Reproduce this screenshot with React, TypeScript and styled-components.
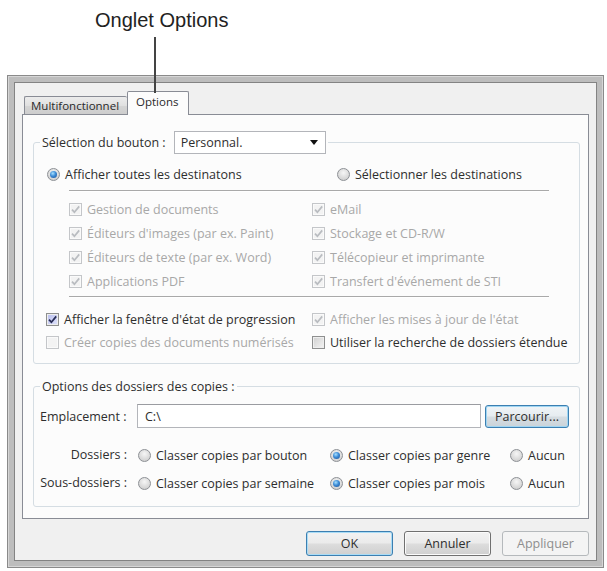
import styled, { createGlobalStyle, css } from 'styled-components';

const GlobalStyle = createGlobalStyle`
  html, body {
    margin: 0;
    padding: 0;
    background: #fff;
  }
  body {
    font-family: "Open Sans", "Noto Sans", "DejaVu Sans", sans-serif;
  }
  * {
    box-sizing: border-box;
  }
`;

const Page = styled.div`
  position: relative;
  width: 607px;
  height: 571px;
  background: #fff;
`;

const Caption = styled.div`
  height: 75px;
  padding: 8px 0 0 95px;
  font-family: "Liberation Sans", Arial, sans-serif;
  font-size: 20px;
  line-height: 24px;
  color: #222;
`;

// callout line from the caption down to the tab
const Leader = styled.div`
  position: absolute;
  left: 154px;
  top: 37px;
  width: 2px;
  height: 56px;
  background: #444;
  z-index: 2;
`;

const Dialog = styled.div`
  margin-left: 7px;
  width: 597px;
  height: 493px;
  border: 1px solid #8a8a8a;
  background: #bdbdbd;
  padding: 6px;
  box-shadow: inset 0 0 0 1px #d6d6d6;
`;

const Client = styled.div`
  height: 100%;
  display: flex;
  flex-direction: column;
  border: 1px solid #838383;
  background: #f0f0f0;
  padding: 8px 7px 4px 7px;
`;

const TabStrip = styled.div`
  display: flex;
  align-items: flex-end;
  height: 23px;
  padding-left: 2px;
`;

const Tab = styled.div<{ $active?: boolean }>`
  display: flex;
  align-items: center;
  font-size: 11.5px;
  color: #2a2a2a;
  border: 1px solid #898c95;
  border-bottom: none;
  border-radius: 2px 2px 0 0;
  ${(p) =>
    p.$active
      ? css`
          width: 62px;
          height: 24px;
          margin-bottom: -1px;
          padding: 0 0 4px 8px;
          background: #fcfcfc;
          position: relative;
          z-index: 1;
        `
      : css`
          width: 103px;
          height: 18px;
          padding-left: 6px;
          border-right: none;
          background: linear-gradient(#ececec, #e0e0e0 50%, #d5d5d5 50%, #cdcdcd);
        `}
`;

const Panel = styled.div`
  flex: 1;
  border: 1px solid #898c95;
  background: #fcfcfc;
  padding: 16px 8px 0 10px;
`;

const Group = styled.fieldset<{ $pad: string }>`
  margin: 0;
  min-width: 0;
  border: 1px solid #d5dde3;
  border-radius: 3px;
  padding: ${(p) => p.$pad};
  & + & {
    margin-top: 13px;
  }
`;

const Legend = styled.legend<{ $shift?: number }>`
  display: flex;
  align-items: center;
  min-height: 18px;
  padding: 0 2px;
  margin-left: ${(p) => p.$shift ?? 0}px;
  font-size: 12.5px;
  color: #2e2e2e;
`;

const Combo = styled.div`
  width: 152px;
  height: 23px;
  margin-left: 8px;
  display: flex;
  align-items: center;
  justify-content: space-between;
  padding: 0 7px 0 6px;
  border: 1px solid #b3b5ba;
  background: #fff;
  font-size: 12.5px;
  color: #2e2e2e;
`;

const RadioRow = styled.div`
  display: grid;
  grid-template-columns: 290px 1fr;
  margin-top: 11px;
`;

const Separator = styled.div<{ $top: number }>`
  height: 2px;
  margin: ${(p) => p.$top}px 22px 0 22px;
  border-top: 1px solid #a9a9a9;
  border-bottom: 1px solid #fff;
`;

const OptionGrid = styled.div<{ $indent: number; $first: number; $top: number; $gap: number }>`
  display: grid;
  grid-template-columns: ${(p) => p.$first}px 1fr;
  row-gap: ${(p) => p.$gap}px;
  margin: ${(p) => p.$top}px 0 0 ${(p) => p.$indent}px;
`;

const Option = styled.label<{ $disabled?: boolean }>`
  display: flex;
  align-items: center;
  gap: 5px;
  height: 18px;
  font-size: 12.5px;
  white-space: nowrap;
  color: ${(p) => (p.$disabled ? '#a8a8a8' : '#2e2e2e')};
`;

const RadioMark = styled.span<{ $checked?: boolean }>`
  position: relative;
  flex: none;
  width: 13px;
  height: 13px;
  border-radius: 50%;
  border: 1px solid #8d9095;
  background: radial-gradient(circle at 50% 35%, #f6f6f6 0%, #dcdcdc 55%, #c6c6c6 100%);
  ${(p) =>
    p.$checked &&
    css`
      &::after {
        content: '';
        position: absolute;
        left: 2px;
        top: 2px;
        width: 7px;
        height: 7px;
        border-radius: 50%;
        background: radial-gradient(circle at 40% 35%, #a6e0ff 0%, #3c8bd6 45%, #1a4d92 100%);
      }
    `}
`;

const BoxMark = styled.span<{ $disabled?: boolean; $checked?: boolean }>`
  flex: none;
  width: 13px;
  height: 13px;
  display: flex;
  align-items: center;
  justify-content: center;
  border: 1px solid ${(p) => (p.$disabled ? '#c4c6c9' : '#8e8f8f')};
  background: ${(p) =>
    p.$disabled
      ? '#f3f3f3'
      : p.$checked
      ? 'linear-gradient(135deg, #b9bfee, #dfe2fa)'
      : 'linear-gradient(135deg, #cfcfcf, #f4f4f4)'};
  box-shadow: inset 0 0 0 1px ${(p) => (p.$disabled ? '#fafafa' : '#eeeeee')};
`;

const Field = styled.div`
  display: flex;
  align-items: center;
  margin-top: 9px;
  height: 24px;
`;

const FieldLabel = styled.span`
  width: 97px;
  font-size: 12.5px;
  color: #2e2e2e;
`;

const TextBox = styled.div`
  flex: 1;
  height: 24px;
  display: flex;
  align-items: center;
  padding-left: 7px;
  border: 1px solid #b3b5ba;
  border-top-color: #9a9ca1;
  background: #fff;
  font-size: 12.5px;
  color: #2e2e2e;
`;

const FolderGrid = styled.div`
  display: grid;
  grid-template-columns: 98px 192px 180px 1fr;
  row-gap: 10px;
  margin-top: 18px;
`;

const RowLabel = styled.span`
  justify-self: end;
  padding-right: 11px;
  height: 18px;
  line-height: 18px;
  font-size: 12.5px;
  color: #2e2e2e;
  white-space: nowrap;
`;

type Variant = 'normal' | 'default' | 'focus' | 'disabled';

const Button = styled.button<{ $variant?: Variant; $w?: number; $h?: number }>`
  width: ${(p) => p.$w ?? 87}px;
  height: ${(p) => p.$h ?? 25}px;
  padding: 0;
  font-family: inherit;
  font-size: 12.5px;
  color: #2e2e2e;
  border-radius: 3px;
  border: 1px solid #707070;
  background: linear-gradient(#f2f2f2 0%, #ebebeb 48%, #dddddd 52%, #cfcfcf 100%);
  box-shadow: inset 0 0 0 1px #fbfbfb;
  ${(p) =>
    p.$variant === 'default' &&
    css`
      border-color: #3c7fb1;
      box-shadow: inset 0 0 0 1px #a9dcf6;
    `}
  ${(p) =>
    p.$variant === 'focus' &&
    css`
      border-color: #3c7fb1;
      box-shadow: inset 0 0 0 1px #9fd5f2;
      background: linear-gradient(#f0f4f7 0%, #e6ecf0 48%, #d6dde2 52%, #cad3d9 100%);
    `}
  ${(p) =>
    p.$variant === 'disabled' &&
    css`
      border-color: #b5b9bc;
      background: #f4f4f4;
      color: #8e8e8e;
      box-shadow: none;
    `}
`;

const ButtonBar = styled.div`
  display: flex;
  justify-content: flex-end;
  gap: 11px;
  margin-top: 12px;
`;

const Radio = ({ label, checked }: { label: string; checked?: boolean }) => (
  <Option>
    <RadioMark $checked={checked} />
    {label}
  </Option>
);

const Check = ({ label, checked, disabled }: { label: string; checked?: boolean; disabled?: boolean }) => (
  <Option $disabled={disabled}>
    <BoxMark $checked={checked} $disabled={disabled}>
      {checked && (
        <svg width="11" height="11" viewBox="0 0 11 11">
          <path
            d="M2 5.6 L4.4 8.2 L9.2 2.4"
            fill="none"
            stroke={disabled ? '#b9bcc0' : '#272c55'}
            strokeWidth="1.7"
          />
        </svg>
      )}
    </BoxMark>
    {label}
  </Option>
);

const destinations: [string, string][] = [
  ['Gestion de documents', 'eMail'],
  ["Éditeurs d'images (par ex. Paint)", 'Stockage et CD-R/W'],
  ['Éditeurs de texte (par ex. Word)', 'Télécopieur et imprimante'],
  ['Applications PDF', "Transfert d'événement de STI"],
];

export default function App() {
  return (
    <Page>
      <GlobalStyle />
      <Caption>Onglet Options</Caption>
      <Leader />
      <Dialog>
        <Client>
          <TabStrip>
            <Tab>Multifonctionnel</Tab>
            <Tab $active>Options</Tab>
          </TabStrip>
          <Panel>
            <Group $pad="0 8px 12px 13px">
              <Legend $shift={-7}>
                Sélection du bouton :
                <Combo>
                  Personnal.
                  <svg width="8" height="5" viewBox="0 0 8 5">
                    <path d="M0 0 H8 L4 5 Z" fill="#111" />
                  </svg>
                </Combo>
              </Legend>
              <RadioRow>
                <Radio label="Afficher toutes les destinatons" checked />
                <Radio label="Sélectionner les destinations" />
              </RadioRow>
              <Separator $top={7} />
              <OptionGrid $indent={22} $first={243} $top={8} $gap={6}>
                {destinations.map(([a, b]) => [
                  <Check key={a} label={a} checked disabled />,
                  <Check key={b} label={b} checked disabled />,
                ])}
              </OptionGrid>
              <Separator $top={6} />
              <OptionGrid $indent={-1} $first={266} $top={12} $gap={5}>
                <Check label="Afficher la fenêtre d'état de progression" checked />
                <Check label="Afficher les mises à jour de l'état" checked disabled />
                <Check label="Créer copies des documents numérisés" disabled />
                <Check label="Utiliser la recherche de dossiers étendue" />
              </OptionGrid>
            </Group>
            <Group $pad="0 10px 14px 6px">
              <Legend>Options des dossiers des copies :</Legend>
              <Field>
                <FieldLabel>Emplacement :</FieldLabel>
                <TextBox>C:\</TextBox>
                <Button $variant="focus" $w={84} $h={23} style={{ marginLeft: 4 }}>
                  Parcourir...
                </Button>
              </Field>
              <FolderGrid>
                <RowLabel>Dossiers :</RowLabel>
                <Radio label="Classer copies par bouton" />
                <Radio label="Classer copies par genre" checked />
                <Radio label="Aucun" />
                <RowLabel>Sous-dossiers :</RowLabel>
                <Radio label="Classer copies par semaine" />
                <Radio label="Classer copies par mois" checked />
                <Radio label="Aucun" />
              </FolderGrid>
            </Group>
          </Panel>
          <ButtonBar>
            <Button $variant="default">OK</Button>
            <Button>Annuler</Button>
            <Button $variant="disabled">Appliquer</Button>
          </ButtonBar>
        </Client>
      </Dialog>
    </Page>
  );
}
